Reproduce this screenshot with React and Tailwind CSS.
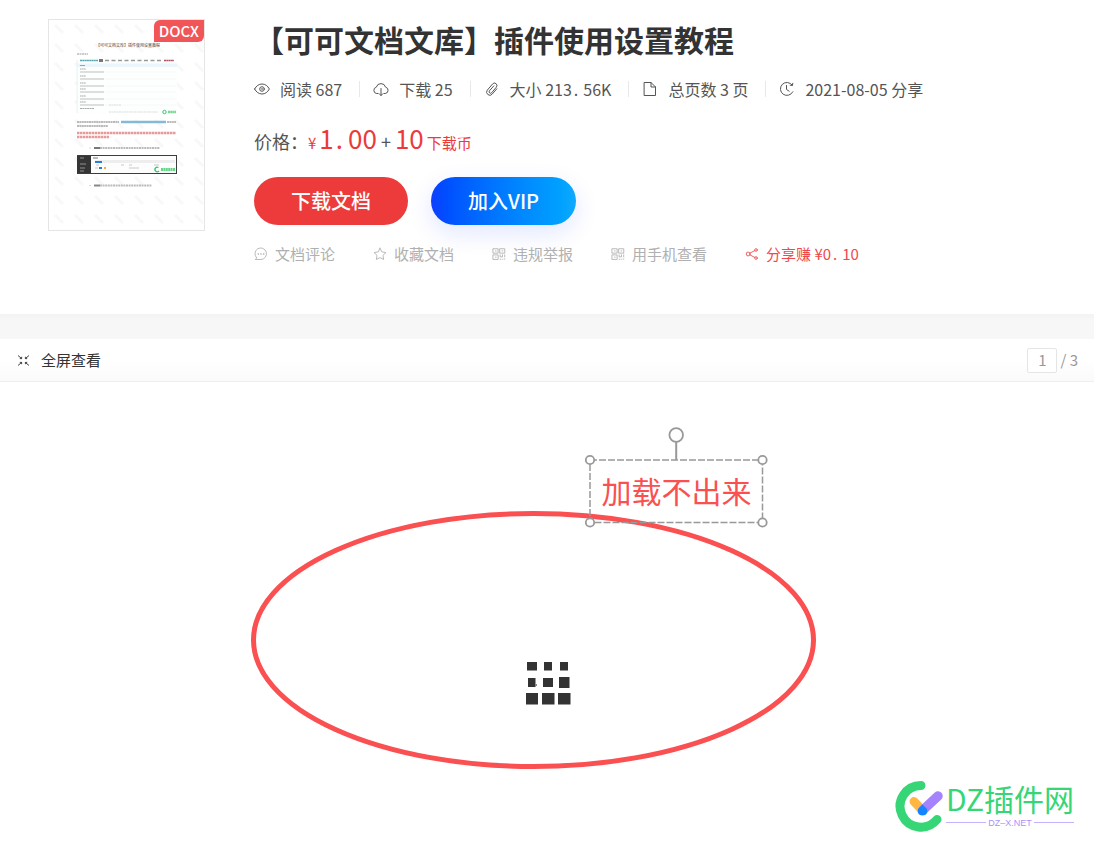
import { useState } from "react"

const TITLE = "【可可文档文库】插件使用设置教程"

const iconPaths = {
  eye: (
    <>
      <path d="M.6 8C2.400 4.800 4.800 3 8 3S13.600 4.800 15.400 8C13.600 11.200 11.200 13 8 13S2.400 11.200.6 8Z" />
      <circle cx="8" cy="8" r="2.300" />
      <circle cx="8" cy="8" r=".2" />
    </>
  ),
  cloud: (
    <>
      <path d="M5 12.500H3.800A3.200 3.200 0 0 1 3.300 6.200A4.800 4.800 0 0 1 12.600 6.200A3.200 3.200 0 0 1 12.200 12.500H11" />
      <path d="M8 7.500V14.500M6.200 12.700L8 14.500L9.800 12.700" />
    </>
  ),
  clip: (
    <path d="M12.800 7.800L8.300 13A2.900 2.900 0 0 1 3.300 9.200L8.500 3A2.400 2.400 0 0 1 12.400 6.100L7.700 11.700A1.400 1.400 0 0 1 5.400 9.900L9.800 4.900" />
  ),
  file: (
    <>
      <path d="M2.500 1.500H9L13.500 6V14.500H2.500Z" />
      <path d="M9 1.500V6H13.500" />
    </>
  ),
  clock: (
    <>
      <path d="M13.300 4.200A6.500 6.500 0 1 0 13.800 10.800" />
      <path d="M7.500 4.500V8.500L10.200 10.200M13.800 2.300L13.400 4.500L11.200 4.200" />
    </>
  ),
  comment: (
    <>
      <path d="M1.800 14.300H8A6.600 6.600 0 1 0 2.900 12.300Z" />
      <path d="M4.700 8H5.100M7.800 8H8.200M10.900 8H11.300" strokeWidth="1.500" />
    </>
  ),
  star: (
    <path d="M8 1.300L10.100 5.600L14.800 6.300L11.400 9.600L12.200 14.300L8 12.100L3.800 14.300L4.600 9.600L1.200 6.300L5.900 5.600Z" />
  ),
  qrcode: (
    <>
      <path d="M1.500 2H7V7H1.500ZM9.200 2H14.600V7H9.200ZM1.500 9H7V14.200H1.500Z" />
      <path d="M3.800 4.500H4.700M11.500 4.500H12.300M3.800 11.600H4.700M9.300 9V11.300H12V9M14.500 9V11.300M9.300 14H10.200M12.200 14H12.500M14.500 14V13.500" />
    </>
  ),
  share: (
    <>
      <circle cx="3.600" cy="8" r="2.200" />
      <circle cx="12.600" cy="3.400" r="1.500" />
      <circle cx="12.600" cy="12.600" r="1.500" />
      <path d="M5.600 7L11.200 4.100M5.600 9L11.200 11.900" />
    </>
  ),
  shrink: (
    <>
      <path d="M2.500 3L5.500 5.500M13.500 3L10.500 5.500M2.500 13L5.500 10.500M13.500 13L10.500 10.500" />
      <path d="M4.500 6H6V4.500M11.500 6H10V4.500M4.500 10H6V11.500M11.500 10H10V11.500" />
    </>
  ),
}

function Icon({ name, className }) {
  return (
    <svg
      viewBox="0 0 16 16"
      className={`shrink-0 ${className}`}
      fill="none"
      stroke="currentColor"
      strokeWidth="1"
      strokeLinejoin="round"
      strokeLinecap="round"
      aria-hidden="true"
    >
      {iconPaths[name]}
    </svg>
  )
}

function Decimal({ value, suffix = "" }) {
  const [whole, fraction] = value.split(".")
  return (
    <span>
      {whole}<span className="mr-[5px] ml-[2px]">.</span>{fraction}{suffix}
    </span>
  )
}

const stats = [
  { icon: "eye", label: "阅读 687" },
  { icon: "cloud", label: "下载 25" },
  { icon: "clip", label: <>大小 <Decimal value="213.56" suffix="K" /></> },
  { icon: "file", label: "总页数 3 页" },
  { icon: "clock", label: "2021-08-05 分享" },
]

const actions = [
  { icon: "comment", label: "文档评论" },
  { icon: "star", label: "收藏文档" },
  { icon: "qrcode", label: "违规举报" },
  { icon: "qrcode", label: "用手机查看" },
]

const formRows = [50, 57, 64, 70, 77, 83]

function DocumentPreview() {
  return (
    <svg viewBox="0 0 155 210" className="block w-full" role="img" aria-label="文档预览">
      <defs>
        <pattern id="watermark" width="20" height="19" patternUnits="userSpaceOnUse">
          <path d="M6 5L14 13" stroke="#f8f8f8" strokeWidth="3" />
        </pattern>
      </defs>
      <rect width="155" height="210" fill="url(#watermark)" />
      <text x="47" y="27" fontSize="4" fill="#444">{TITLE}</text>
      <path d="M28 34H39" stroke="#ccc" strokeWidth="2" strokeDasharray="2 .5" />

      <rect x="28" y="38" width="100" height="56" fill="#fdfefe" />
      <path d="M28 40V93" stroke="#e4f2f0" />
      <path d="M31 40.500H49" stroke="#55a9ae" strokeWidth="1.300" strokeDasharray="2 .3" />
      <rect x="50" y="39" width="4" height="3" fill="#777" />
      <path d="M56 40.500H112" stroke="#999" strokeWidth="1.300" strokeDasharray="4 2.500" />
      <path d="M115 40.500H125" stroke="#b75260" strokeWidth="1.500" strokeDasharray="2 .3" />
      <rect x="28" y="43.500" width="100" height="3.500" fill="#eaf6fb" />
      <path d="M31 45.500H36" stroke="#63b5d4" />
      {formRows.map((y) => (
        <g key={y}>
          <path d={`M31 ${y - 1}H37`} stroke="#aaa" strokeDasharray="1.500 .3" />
          <path d={`M31 ${y + 2}H55`} stroke="#ccc" strokeWidth="1.300" />
          <path d={`M56 ${y + 2}H127`} stroke="#f3f3f3" strokeWidth=".5" />
        </g>
      ))}
      <path d="M31 88.500H45" stroke="#aaa" strokeDasharray="2 .4" />
      <path d="M60 85H72M60 92H109" stroke="#ddd" strokeDasharray="2 .5" />
      <circle cx="115.500" cy="92" r="1.700" fill="none" stroke="#35ca69" />
      <path d="M119 92H127" stroke="#75d995" strokeWidth="2.500" strokeDasharray="2 .3" />

      <path d="M28 102H70M118 102H127M28 106H59" stroke="#bbb" strokeWidth="2" strokeDasharray="2 .4" />
      <path d="M72 102H117" stroke="#86b9d8" strokeWidth="2.500" />
      <path d="M28 113H127M28 117H60" stroke="#e69a9a" strokeWidth="2.500" strokeDasharray="2.500 .5" />
      <circle cx="41" cy="128" r=".6" fill="#aaa" />
      <path d="M51 128H111" stroke="#bbb" strokeWidth="2" strokeDasharray="2 .6" />
      <path d="M45 128H51" stroke="#777" strokeWidth="2" />

      <rect x="28.500" y="135.500" width="99" height="18" fill="#fdfdfd" stroke="#3d3d3d" />
      <rect x="28" y="136" width="14" height="17" fill="#353535" />
      <path d="M31 138H35M31 144H37M31 148H36M31 151H35" stroke="#aaa" strokeWidth=".8" />
      <path d="M44 138H49" stroke="#777" />
      <rect x="46" y="140" width="80" height="3" fill="#eee" />
      <rect x="46" y="141" width="7" height="2" fill="#257edc" />
      <rect x="50" y="147" width="3" height="2" fill="#257edc" />
      <rect x="55" y="147" width="2" height="2" fill="#f2b33d" />
      <path d="M47 145H50M72 145H75M80 145H83M105 145H110M46 148H49M80 148H90" stroke="#bbb" strokeWidth=".8" />
      <path d="M109.500 147.500A2.300 2.300 0 1 0 110 151" fill="none" stroke="#31c967" strokeWidth="1.300" />
      <path d="M112 149.500H126" stroke="#65d588" strokeWidth="3" strokeDasharray="2 .4" />
      <circle cx="41" cy="165.500" r=".6" fill="#aaa" />
      <path d="M51 165.500H103" stroke="#bbb" strokeWidth="2" strokeDasharray="2 .6" />
      <path d="M45 165.500H51" stroke="#888" strokeWidth="2" />
    </svg>
  )
}

function DocumentHeader() {
  return (
    <header className="flex gap-[49px] px-12 pt-[19px] pb-[50px]">
      <div className="relative h-[212px] w-[157px] shrink-0 border border-[#e5e5e5]">
        <DocumentPreview />
        <span className="absolute top-0 right-0 rounded-tl-md rounded-br-md bg-[#f15557] px-[5px] text-[15px] leading-[22px] font-medium text-white">
          DOCX
        </span>
      </div>

      <div className="min-w-0 flex-1">
        <h1 className="text-[30px] leading-10 font-bold text-[#333]">{TITLE}</h1>

        <ul className="mt-[18px] flex items-center text-base leading-6 whitespace-nowrap text-[#555]">
          {stats.map((stat, i) => (
            <li key={stat.icon} className="flex items-center">
              {i > 0 && <span className="mr-[13px] ml-[17px] h-4 w-px bg-[#e8e8e8]" />}
              <Icon name={stat.icon} className="mr-[10px] size-4" />
              <span>{stat.label}</span>
            </li>
          ))}
        </ul>

        <p className="mt-[17px] flex items-baseline text-lg leading-10 text-[#555]">
          价格：
          <span className="text-[15px] text-[#ec3a3b]">¥</span>
          <span className="ml-[3px] text-[26px] text-[#ec3a3b]">
            <Decimal value="1.00" />
          </span>
          <span className="mx-1">+</span>
          <span className="text-[26px] text-[#ec3a3b]">10</span>
          <span className="ml-[3px] text-[15px] text-[#ec3a3b]">下载币</span>
        </p>

        <div className="mt-[14px] flex gap-[23px] text-xl leading-[48px] font-medium text-white">
          <button type="button" className="rounded-full bg-[#ed3b3b] px-[37px]">下载文档</button>
          <button
            type="button"
            className="rounded-full bg-linear-to-r from-[#0d3fff] to-[#10aaff] px-[37px] shadow-[0_8px_24px_rgba(20,60,255,0.12)]"
          >
            加入VIP
          </button>
        </div>

        <div className="mt-[19px] flex gap-[38px] text-[15px] leading-5 whitespace-nowrap text-[#b0b0b0]">
          {actions.map((action) => (
            <a key={action.label} href="#" className="flex items-center gap-[7px]">
              <Icon name={action.icon} className="size-[14px]" />
              {action.label}
            </a>
          ))}
          <a href="#" className="flex items-center gap-[7px] text-[#f0494b]">
            <Icon name="share" className="size-[14px]" />
            <span>分享赚 ¥<Decimal value="0.10" /></span>
          </a>
        </div>
      </div>
    </header>
  )
}

function ViewerToolbar() {
  const [page, setPage] = useState("1")

  return (
    <div className="flex items-center justify-between border-b border-[#eee] bg-linear-to-b from-white from-50% to-[#fafafa] px-4 text-[15px] leading-[42px]">
      <button type="button" className="flex items-center gap-[10px] text-[#333]">
        <Icon name="shrink" className="size-[15px]" />
        全屏查看
      </button>
      <label className="flex items-center gap-[3px] text-[#999]">
        <input
          type="text"
          aria-label="页码"
          value={page}
          onChange={(e) => setPage(e.target.value)}
          className="h-[25px] w-[30px] rounded-xs border border-[#e5e5e5] bg-white text-center"
        />
        / 3
      </label>
    </div>
  )
}

function Loader() {
  return (
    <svg width="46" height="44" viewBox="0 0 46 44" fill="#333" className="ml-[2px]" role="img" aria-label="加载中">
      <rect x="2" y="1" width="10" height="8.500" />
      <rect x="19" y="1" width="8" height="8.500" />
      <rect x="35" y="1" width="8" height="8.500" />
      <rect x="3" y="17" width="7.500" height="9" />
      <rect x="10" y="23" width="2" height="2" fill="#888" />
      <rect x="18" y="17" width="10" height="9" />
      <rect x="34" y="16" width="10.500" height="11" />
      <rect x="1" y="32" width="12" height="11.500" />
      <rect x="17" y="32" width="12.500" height="11.500" />
      <rect x="33" y="32" width="12.500" height="11.500" />
    </svg>
  )
}

function SelectedNote() {
  return (
    <div className="absolute top-[45px] left-[584px] h-[102px] w-[185px]">
      <svg viewBox="0 0 185 102" className="absolute inset-0" fill="none" stroke="#999" aria-hidden="true">
        <rect x="6" y="33" width="172.500" height="62.500" strokeWidth="1.500" strokeDasharray="7 2" />
        <path d="M92.200 15V33" strokeWidth="2" />
        <g fill="white" strokeWidth="1.800">
          <circle cx="92.200" cy="8" r="6.800" />
          <circle cx="6" cy="33" r="4.200" />
          <circle cx="178.500" cy="33" r="4.200" />
          <circle cx="6" cy="95.500" r="4.200" />
          <circle cx="178.500" cy="95.500" r="4.200" />
        </g>
      </svg>
      <p className="relative pt-10 text-center text-[30px] leading-[46px] whitespace-nowrap text-[#fa5051]">
        加载不出来
      </p>
    </div>
  )
}

function SiteLogo() {
  return (
    <a href="#" className="absolute right-5 bottom-[14px] flex items-center gap-[3px]">
      <svg width="48" height="52" viewBox="0 0 48 52" fill="none" strokeLinecap="round">
        <path d="M26 5.500A20.800 20.800 0 1 0 42 39.500" stroke="#36d677" strokeWidth="9" />
        <path d="M19 21.500L27 30" stroke="#ffb741" strokeWidth="9" />
        <path d="M28 30L43 16" stroke="#a583ff" strokeWidth="9.500" />
        <path d="M27.500 24.500L31.500 28.500C33.500 32 31.500 35.500 27.500 35.500S21.500 32 23.500 28.500Z" fill="#1484ff" />
      </svg>
      <span className="flex flex-col gap-[5px]">
        <span className="text-[30px] leading-7 text-[#36d677]">DZ插件网</span>
        <span className="flex items-center gap-[2px] font-['Liberation_Sans',sans-serif] text-[9px] leading-3 text-[#ad91fb]">
          <span className="h-px flex-1 bg-[#c6b3ff]" />
          DZ–X.NET
          <span className="h-px flex-1 bg-[#c6b3ff]" />
        </span>
      </span>
    </a>
  )
}

export default function App() {
  return (
    <div className="flex min-h-screen flex-col bg-white font-['Noto_Sans_CJK_SC',sans-serif]">
      <DocumentHeader />
      <div className="h-[25px] bg-linear-to-b from-[#f3f3f3] to-[#f7f7f7] to-25%" />
      <ViewerToolbar />
      <main className="relative flex min-h-[460px] flex-1 justify-center overflow-hidden pt-[279px]">
        <Loader />
        <svg
          width="565"
          height="260"
          viewBox="0 0 565 260"
          className="absolute top-[128px] left-[251px]"
          fill="none"
          aria-hidden="true"
        >
          <ellipse cx="282.500" cy="130" rx="280" ry="126.500" stroke="#fa5051" strokeWidth="5" />
        </svg>
        <SelectedNote />
        <SiteLogo />
      </main>
    </div>
  )
}
